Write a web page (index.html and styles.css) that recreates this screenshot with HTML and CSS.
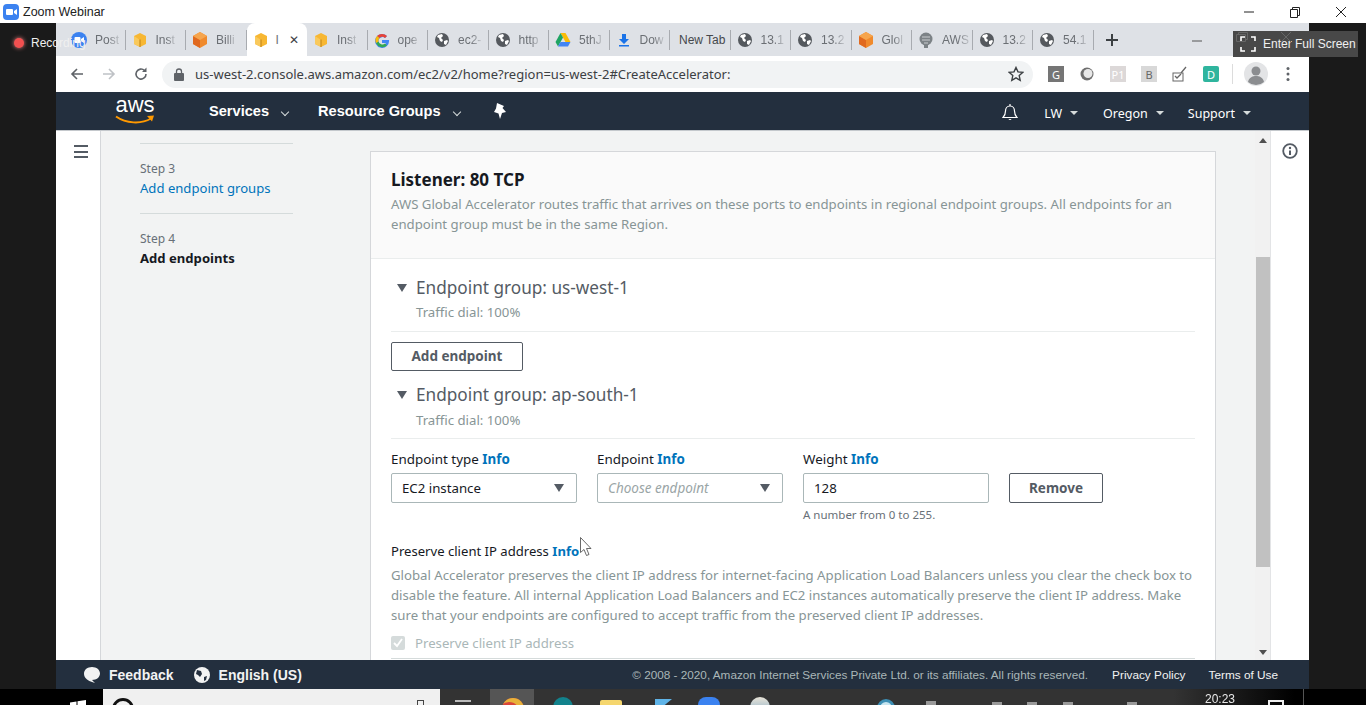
FILE: index.html
```html
<!DOCTYPE html>
<html lang="en">
<head>
    <meta charset="UTF-8">
    <title>Zoom Webinar</title>
    <link rel="stylesheet" href="styles.css">
</head>
<body>
    <svg class="defs" width="0" height="0">
        <symbol id="cubeY" viewBox="0 0 16 16">
            <path d="M8 1l6 3v8l-6 3-6-3V4z" fill="#f7b733"/>
            <path d="M8 8v7l-6-3V4z" fill="#f9c95c"/>
            <path d="M7.4 7.5v7.5h1.2V7.5z" fill="#c98a1a"/>
        </symbol>
        <symbol id="cubeO" viewBox="0 0 16 16">
            <path d="M8 0l7 4v8l-7 4-7-4V4z" fill="#f08a2c"/>
            <path d="M8 8v8l-7-4V4z" fill="#e0691f"/>
            <path d="M8 0l7 4-7 4-7-4z" fill="#f6a54d"/>
        </symbol>
        <symbol id="globe" viewBox="0 0 16 16">
            <circle cx="8" cy="8" r="7" fill="#55595e"/>
            <path d="M4 3l4-1 1 2-2 2 2 2-1 2-2-1-1-3-2-1zM10 9l3-1 1 1-2 4-2-1z" fill="#fff"/>
        </symbol>
    </svg>

    <header class="titlebar">
        <svg class="zoom-logo" width="16" height="16" viewBox="0 0 16 16"><rect width="16" height="16" rx="4" fill="#3b82f0"/><rect x="3" y="5" width="7" height="6" rx="1" fill="#fff"/><path d="M11 7l3-2v6l-3-2z" fill="#fff"/></svg>
        <span class="titlebar-name">Zoom Webinar</span>
        <div class="win-controls">
            <svg width="12" height="12" viewBox="0 0 12 12"><path d="M1 6h10" stroke="#222" stroke-width="1"/></svg>
            <svg width="12" height="12" viewBox="0 0 12 12"><path d="M1.5 3.5h7v8h-7zM3.5 3.5v-2h7v8h-2" fill="none" stroke="#222"/></svg>
            <svg width="12" height="12" viewBox="0 0 12 12"><path d="M1 1l10 10M11 1L1 11" stroke="#222"/></svg>
        </div>
    </header>

    <div class="stage">
        <div class="side-black side-left"></div>
        <div class="browser">
            <div class="tabs">
                <div class="tab"><svg class="fav" viewBox="0 0 16 16"><rect width="16" height="16" rx="8" fill="#3b82f0"/><rect x="3.5" y="5" width="6" height="6" rx="1" fill="#fff"/><path d="M10 7l3-2v6l-3-2z" fill="#fff"/></svg><span class="tab-text">Post</span></div>
                <div class="tab"><svg class="fav"><use href="#cubeY"/></svg><span class="tab-text">Inst</span></div>
                <div class="tab"><svg class="fav"><use href="#cubeO"/></svg><span class="tab-text">Billi</span></div>
                <div class="tab tab-active"><svg class="fav"><use href="#cubeY"/></svg><span class="tab-text tab-text-short">I</span><span class="tab-x">✕</span></div>
                <div class="tab"><svg class="fav"><use href="#cubeY"/></svg><span class="tab-text">Inst</span></div>
                <div class="tab"><svg class="fav" viewBox="0 0 16 16"><path d="M15 8H8v3h4a4 4 0 1 1-1-5l2-2a7 7 0 1 0 2 4z" fill="#4285f4"/><path d="M3 4l2.5 2A4 4 0 0 1 11 6l2-2A7 7 0 0 0 3 4z" fill="#ea4335"/><path d="M2 11l2.5-1.5a4 4 0 0 0 6.5 2L13 13.5A7 7 0 0 1 2 11z" fill="#34a853"/><path d="M2 11a7 7 0 0 1 1-7l2.5 2a4 4 0 0 0-1 3.5z" fill="#fbbc05"/></svg><span class="tab-text">ope</span></div>
                <div class="tab"><svg class="fav"><use href="#globe"/></svg><span class="tab-text">ec2-</span></div>
                <div class="tab"><svg class="fav"><use href="#globe"/></svg><span class="tab-text">http</span></div>
                <div class="tab"><svg class="fav" viewBox="0 0 16 16"><path d="M5.5 1h5l5 9h-5z" fill="#fbbc05"/><path d="M5.5 1l-5 9 2.5 4.5 5-9z" fill="#1fa463"/><path d="M3 14.5h10l2.5-4.5h-10z" fill="#4285f4"/></svg><span class="tab-text">5thJ</span></div>
                <div class="tab"><svg class="fav" viewBox="0 0 16 16"><path d="M6 2h4v5h3l-5 5-5-5h3zM3 13h10v1.5H3z" fill="#1a73e8"/></svg><span class="tab-text">Dow</span></div>
                <div class="tab tab-plain"><span class="tab-text tab-text-full">New Tab</span></div>
                <div class="tab"><svg class="fav"><use href="#globe"/></svg><span class="tab-text">13.1</span></div>
                <div class="tab"><svg class="fav"><use href="#globe"/></svg><span class="tab-text">13.2</span></div>
                <div class="tab"><svg class="fav"><use href="#cubeO"/></svg><span class="tab-text">Glol</span></div>
                <div class="tab"><svg class="fav" viewBox="0 0 16 16"><circle cx="8" cy="7" r="6.5" fill="#7c8286"/><path d="M4 5h8M4 8h8M6 11h4" stroke="#c9cccf"/><rect x="6" y="13" width="4" height="3" fill="#7c8286"/></svg><span class="tab-text">AWS</span></div>
                <div class="tab"><svg class="fav"><use href="#globe"/></svg><span class="tab-text">13.2</span></div>
                <div class="tab"><svg class="fav"><use href="#globe"/></svg><span class="tab-text">54.1</span></div>
                <svg class="new-tab" width="14" height="14" viewBox="0 0 14 14"><path d="M7 1v12M1 7h12" stroke="#3c4043" stroke-width="2"/></svg>
            </div>

            <div class="toolbar">
                <svg class="tool-icon" width="16" height="16" viewBox="0 0 16 16"><path d="M14 8H3M8 3L3 8l5 5" fill="none" stroke="#5f6368" stroke-width="1.6"/></svg>
                <svg class="tool-icon" width="16" height="16" viewBox="0 0 16 16"><path d="M2 8h11M8 3l5 5-5 5" fill="none" stroke="#bfc2c6" stroke-width="1.6"/></svg>
                <svg class="tool-icon" width="16" height="16" viewBox="0 0 16 16"><path d="M13 8a5 5 0 1 1-1.5-3.5" fill="none" stroke="#5f6368" stroke-width="1.6"/><path d="M13.5 1.5V6H9z" fill="#5f6368"/></svg>
                <div class="omnibox">
                    <svg width="10" height="13" viewBox="0 0 10 13"><rect y="5" width="10" height="8" rx="1" fill="#5f6368"/><path d="M2.5 5V3.5a2.5 2.5 0 0 1 5 0V5" fill="none" stroke="#5f6368" stroke-width="1.3"/></svg>
                    <span class="url">us-west-2.console.aws.amazon.com/ec2/v2/home?region=us-west-2#CreateAccelerator:</span>
                    <svg class="star" width="16" height="16" viewBox="0 0 16 16"><path d="M8 1.5l2 4.4 4.7.5-3.5 3.2 1 4.7L8 11.9l-4.2 2.4 1-4.7L1.3 6.4 6 5.9z" fill="none" stroke="#3c4043" stroke-width="1.4"/></svg>
                </div>
                <div class="extensions">
                    <span class="ext ext-g">G</span>
                    <svg class="ext-svg" width="16" height="16" viewBox="0 0 16 16"><circle cx="8" cy="8" r="6.5" fill="#6f6f6f"/><circle cx="9" cy="7.5" r="4.5" fill="#e8e8e8"/></svg>
                    <span class="ext ext-p">P1</span>
                    <span class="ext ext-b">B</span>
                    <svg class="ext-svg" width="16" height="16" viewBox="0 0 16 16"><rect x="1" y="7" width="10" height="8" fill="none" stroke="#666"/><path d="M3 10l2 2 4-4M9 7l5-6" fill="none" stroke="#666" stroke-width="1.3"/></svg>
                    <span class="ext ext-d">D</span>
                </div>
                <span class="tool-divider"></span>
                <svg class="avatar" width="24" height="24" viewBox="0 0 24 24"><circle cx="12" cy="12" r="12" fill="#e3e4e6"/><circle cx="12" cy="9" r="4.5" fill="#8b8d90"/><path d="M4 20c1-5 5-6 8-6s7 1 8 6a12 12 0 0 1-16 0z" fill="#8b8d90"/></svg>
                <svg class="dots" width="4" height="16" viewBox="0 0 4 16"><circle cx="2" cy="2.5" r="1.5" fill="#5f6368"/><circle cx="2" cy="8" r="1.5" fill="#5f6368"/><circle cx="2" cy="13.5" r="1.5" fill="#5f6368"/></svg>
            </div>

            <nav class="topnav">
                <div class="aws-logo">
                    <span class="aws-word">aws</span>
                    <svg width="40" height="10" viewBox="0 0 40 10"><path d="M1 1.5c10 7 25 8 35 2" fill="none" stroke="#ff9900" stroke-width="2"/><path d="M32 1l7-.5-2 6z" fill="#ff9900"/></svg>
                </div>
                <span class="nav-main nav-services">Services</span><i class="chev"></i>
                <span class="nav-main nav-groups">Resource Groups</span><i class="chev"></i>
                <svg class="pin" width="14" height="16" viewBox="0 0 14 16"><path d="M4 0l7 3-1.5 2 3.5 4-4 1-2 6-1.5-5.5L1 9l2-3.5z" fill="#fff"/></svg>
                <div class="nav-right">
                    <svg class="bell" width="16" height="18" viewBox="0 0 16 18"><path d="M8 2c-3 0-4.5 2.5-4.5 5 0 4-1.5 5.5-2.5 6.5h14c-1-1-2.5-2.500-2.500-6.500 0-2.500-1.500-5-4.500-5z" fill="none" stroke="#fff" stroke-width="1.2"/><path d="M6.500 15a1.600 1.600 0 0 0 3 0z" fill="#fff"/><path d="M8 0v2" stroke="#fff" stroke-width="1.2"/></svg>
                    <span class="nav-sub nav-lw">LW</span><i class="tri"></i>
                    <span class="nav-sub nav-oregon">Oregon</span><i class="tri"></i>
                    <span class="nav-sub nav-support">Support</span><i class="tri"></i>
                </div>
            </nav>

            <main class="console">
                <div class="rail">
                    <span class="burger"><i></i><i></i><i></i></span>
                </div>
                <aside class="wizard">
                    <div class="step">
                        <div class="step-no">Step 3</div>
                        <a class="step-link">Add endpoint groups</a>
                    </div>
                    <div class="step">
                        <div class="step-no">Step 4</div>
                        <div class="step-now">Add endpoints</div>
                    </div>
                </aside>
                <section class="content">
                    <div class="card">
                        <div class="card-head">
                            <h2>Listener: 80 TCP</h2>
                            <p class="muted">AWS Global Accelerator routes traffic that arrives on these ports to endpoints in regional endpoint groups. All endpoints for an<br>endpoint group must be in the same Region.</p>
                        </div>
                        <div class="card-body">
                            <div class="group">
                                <div class="group-title"><i class="group-tri"></i>Endpoint group: us-west-1</div>
                                <div class="group-dial muted">Traffic dial: 100%</div>
                            </div>
                            <button class="btn btn-add">Add endpoint</button>
                            <div class="group group-second">
                                <div class="group-title"><i class="group-tri"></i>Endpoint group: ap-south-1</div>
                                <div class="group-dial muted">Traffic dial: 100%</div>
                            </div>
                            <div class="fields">
                                <div class="field">
                                    <label class="field-label">Endpoint type <a class="info">Info</a></label>
                                    <div class="control">EC2 instance<i class="select-tri"></i></div>
                                </div>
                                <div class="field">
                                    <label class="field-label">Endpoint <a class="info">Info</a></label>
                                    <div class="control control-empty">Choose endpoint<i class="select-tri"></i></div>
                                </div>
                                <div class="field">
                                    <label class="field-label">Weight <a class="info">Info</a></label>
                                    <div class="control">128</div>
                                    <div class="hint">A number from 0 to 255.</div>
                                </div>
                                <button class="btn btn-remove">Remove</button>
                            </div>
                            <div class="field-label preserve-label">Preserve client IP address <a class="info">Info</a></div>
                            <p class="muted preserve-text">Global Accelerator preserves the client IP address for internet-facing Application Load Balancers unless you clear the check box to<br>disable the feature. All internal Application Load Balancers and EC2 instances automatically preserve the client IP address. Make<br>sure that your endpoints are configured to accept traffic from the preserved client IP addresses.</p>
                            <div class="check-row">
                                <span class="checkbox"><svg width="10" height="10" viewBox="0 0 10 10"><path d="M1 5l3 3 5-7" fill="none" stroke="#fff" stroke-width="1.8"/></svg></span>
                                <span class="check-text">Preserve client IP address</span>
                            </div>
                        </div>
                    </div>
                </section>
                <div class="scrollbar">
                    <i class="scroll-up"></i>
                    <span class="scroll-thumb"></span>
                    <i class="scroll-down"></i>
                </div>
                <div class="tools-panel">
                    <svg width="16" height="16" viewBox="0 0 16 16"><circle cx="8" cy="8" r="6.8" fill="none" stroke="#545b64" stroke-width="1.8"/><circle cx="8" cy="5" r="1.2" fill="#545b64"/><path d="M8 7.5V12" stroke="#545b64" stroke-width="2"/></svg>
                </div>
            </main>

            <footer class="footer">
                <svg width="18" height="18" viewBox="0 0 18 18"><path d="M9 1c4.5 0 8 2.800 8 6.500S13.500 14 9 14l3 3c-4-1-8-3-9.500-5C1.500 11 1 9 1 7.500 1 3.800 4.500 1 9 1z" fill="#f2f3f3"/></svg>
                <span class="foot-main foot-feedback">Feedback</span>
                <svg class="foot-globe" width="16" height="16" viewBox="0 0 16 16"><circle cx="8" cy="8" r="8" fill="#f2f3f3"/><path d="M3 3l4 1 1 3-2 3-2-2-2-1zM10 10l3-1-1 4-2 1z" fill="#232f3e"/></svg>
                <span class="foot-main foot-lang">English (US)</span>
                <span class="foot-copy">© 2008 - 2020, Amazon Internet Services Private Ltd. or its affiliates. All rights reserved.</span>
                <span class="foot-link foot-privacy">Privacy Policy</span>
                <span class="foot-link foot-terms">Terms of Use</span>
            </footer>
        </div>
        <div class="side-black"></div>

        <div class="recording"><i class="rec-dot"></i>Recording</div>
        <div class="ghost-controls">
            <svg width="10" height="10" viewBox="0 0 10 10"><path d="M0 5h10" stroke="#555"/></svg>
        </div>
        <div class="fullscreen">
            <svg class="ghost-restore" width="12" height="10" viewBox="0 0 12 10"><path d="M.5 2.500h9v7h-9zM2.500 2.500v-2h9v7h-2" fill="none" stroke="#666"/></svg>
            <svg width="16" height="16" viewBox="0 0 16 16"><path d="M1 5V1h4M11 1h4v4M15 11v4h-4M5 15H1v-4" fill="none" stroke="#fff" stroke-width="1.6"/></svg>
            Enter Full Screen
            <svg class="ghost-close" width="10" height="10" viewBox="0 0 10 10"><path d="M0 0l10 10M10 0L0 10" stroke="#666"/></svg>
        </div>
        <svg class="cursor" width="13" height="20" viewBox="0 0 13 20"><path d="M.5.500v15l3.500-3 2.500 6 2.500-1-2.500-6H11z" fill="#fff" stroke="#444" stroke-width=".8"/></svg>
    </div>

    <div class="taskbar">
        <div class="task-start">
            <svg class="win-logo" width="16" height="16" viewBox="0 0 16 16"><path d="M0 2.500l6.500-1v6H0zM7.500 1.300L16 0v7.500H7.500zM0 8.500h6.500v6L0 13.500zM7.500 8.500H16V16l-8.500-1.300z" fill="#fff"/></svg>
        </div>
        <div class="task-search">
            <i class="search-ring"></i>
            <i class="search-mic"></i>
        </div>
        <div class="task-items">
            <i class="task-view"></i>
            <div class="task-active"><i class="ti ti-chrome"></i></div>
            <i class="ti ti-teal"></i>
            <i class="ti ti-folder"></i>
            <i class="ti ti-play"></i>
            <i class="ti ti-zoom"></i>
            <i class="ti ti-bird"></i>
            <i class="ti ti-aws"></i>
            <i class="tick tick-1"></i>
            <i class="tick tick-2"></i>
            <i class="tick tick-3"></i>
            <i class="tick tick-4"></i>
            <i class="tick tick-5"></i>
            <span class="clock">20:23</span>
            <i class="notify"></i>
        </div>
    </div>
</body>
</html>
```

FILE: styles.css
```css
* {
    box-sizing: border-box;
}

html, body {
    margin: 0;
    height: 705px;
    overflow: hidden;
}

body {
    background: #fff;
    font-family: "Noto Sans", sans-serif;
    font-size: 14px;
    color: #16191f;
    /* the reference is a frame of a video, everything is a bit soft */
    filter: blur(0.35px);
}

.defs {
    position: absolute;
}

p, h2 {
    margin: 0;
}

/* window title bar */
.titlebar {
    height: 23px;
    display: flex;
    align-items: center;
    padding-left: 3px;
    background: #fff;
}

.titlebar-name {
    margin-left: 4px;
    font-family: "Liberation Sans", sans-serif;
    font-size: 12.5px;
    color: #222;
}

.win-controls {
    margin-left: auto;
    display: flex;
    gap: 34px;
    padding-right: 19px;
}

/* black video margins and browser */
.stage {
    position: relative;
    height: 666px;
    display: flex;
    background: #1a1a1a;
}

.side-black {
    flex: 1;
}

.side-left {
    flex: none;
    width: 56px;
}

.browser {
    width: 1253px;
    display: flex;
    flex-direction: column;
}

/* tab strip */
.tabs {
    height: 33px;
    display: flex;
    align-items: stretch;
    padding-left: 9px;
    background: #dee1e6;
}

.tab {
    width: 60.5px;
    display: flex;
    align-items: center;
    padding-left: 6px;
    position: relative;
    font-family: "Liberation Sans", sans-serif;
    font-size: 12px;
    color: #6b6f74;
}

.tab::after {
    content: "";
    position: absolute;
    right: 0;
    top: 7px;
    height: 20px;
    width: 1px;
    background: #a8abb0;
}

.tab-active {
    background: #fff;
    border-radius: 8px 8px 0 0;
}

.tab-active::after {
    display: none;
}

.fav {
    width: 16px;
    height: 16px;
    flex: none;
}

.tab-text {
    margin-left: 8px;
    white-space: nowrap;
    -webkit-mask-image: linear-gradient(90deg, #000 55%, rgba(0, 0, 0, 0.25));
    mask-image: linear-gradient(90deg, #000 55%, rgba(0, 0, 0, 0.25));
}

.tab-text-short {
    margin-left: 7px;
    -webkit-mask-image: none;
    mask-image: none;
}

.tab-x {
    margin-left: 10px;
    font-size: 12px;
    color: #3c4043;
}

.tab-plain {
    padding-left: 9px;
}

.tab-text-full {
    margin-left: 0;
    color: #45484c;
    -webkit-mask-image: none;
    mask-image: none;
}

.new-tab {
    align-self: center;
    margin-left: 11px;
}

/* address bar */
.toolbar {
    height: 36px;
    display: flex;
    align-items: center;
    padding-left: 13px;
    background: #fff;
}

.tool-icon {
    margin-right: 16px;
}

.omnibox {
    width: 871px;
    height: 27px;
    margin-left: -3px;
    display: flex;
    align-items: center;
    padding-left: 12px;
    padding-right: 9px;
    border-radius: 14px;
    background: #f1f3f4;
}

.url {
    margin-left: 11px;
    font-size: 13px;
    color: #3c4043;
    white-space: nowrap;
}

.star {
    margin-left: auto;
}

.extensions {
    display: flex;
    align-items: center;
    gap: 15px;
    margin-left: 15px;
}

.ext {
    width: 16px;
    height: 16px;
    display: flex;
    align-items: center;
    justify-content: center;
    font-size: 11px;
    color: #fff;
    background: #757575;
}

.ext-p {
    background: #dcd8d8;
}

.ext-b {
    background: #d8d8d8;
    color: #666;
}

.ext-d {
    background: #2fb59e;
    border-radius: 2px;
}

.tool-divider {
    width: 1px;
    height: 20px;
    margin-left: 13px;
    background: #dcdcdc;
}

.avatar {
    margin-left: 11px;
}

.dots {
    margin-left: 18px;
}

/* aws navigation */
.topnav {
    height: 39px;
    display: flex;
    align-items: center;
    background: #232f3e;
    border-bottom: 1px solid #c4c8cc;
    color: #fff;
}

.aws-logo {
    width: 40px;
    margin-left: 59px;
    display: flex;
    flex-direction: column;
    align-items: center;
}

.aws-word {
    height: 18px;
    line-height: 16px;
    font-family: "Liberation Sans", sans-serif;
    font-size: 22px;
}

.nav-main {
    font-family: "Liberation Sans", sans-serif;
    font-size: 14.6px;
    font-weight: bold;
    white-space: nowrap;
}

.nav-services {
    margin-left: 54px;
}

.nav-groups {
    margin-left: 30px;
}

.chev {
    width: 6px;
    height: 6px;
    margin-left: 13px;
    margin-top: 1px;
    border-right: 1.5px solid #d5dbdb;
    border-bottom: 1.5px solid #d5dbdb;
    transform: rotate(45deg);
}

.pin {
    margin-left: 33px;
}

.nav-right {
    margin-left: auto;
    margin-top: 4px;
    display: flex;
    align-items: center;
    padding-right: 58px;
}

.nav-sub {
    font-size: 12.5px;
    white-space: nowrap;
}

.nav-lw {
    margin-left: 26px;
}

.nav-oregon {
    margin-left: 25px;
}

.nav-support {
    margin-left: 24px;
}

.tri {
    width: 0;
    height: 0;
    margin-left: 8px;
    border-left: 4px solid transparent;
    border-right: 4px solid transparent;
    border-top: 4px solid #d5dbdb;
}

/* console body */
.console {
    height: 529px;
    display: flex;
    background: #f2f3f3;
    overflow: hidden;
}

.rail {
    width: 45px;
    flex: none;
    padding: 14px 0 0 18px;
    background: #fff;
    border-right: 1px solid #d5d7da;
}

.burger {
    display: flex;
    flex-direction: column;
    gap: 3.5px;
    width: 14px;
}

.burger i {
    height: 2px;
    background: #545b64;
}

.wizard {
    width: 269px;
    flex: none;
    padding: 12px 0 0 39px;
}

.step {
    width: 153px;
    padding: 15px 0;
    border-top: 1px solid #d5dbdb;
    line-height: 20px;
}

.step-no {
    font-size: 12px;
    color: #687078;
    margin-bottom: -1px;
}

.step-link {
    display: block;
    color: #0073bb;
    font-size: 13.1px;
}

.step-now {
    font-size: 13.1px;
    font-weight: bold;
}

.content {
    width: 885px;
    flex: none;
    padding-top: 20px;
}

.card {
    width: 846px;
    background: #fff;
    border: 1px solid #d5d7da;
    border-bottom: 0;
}

.card-head {
    height: 107px;
    padding: 16px 20px 0;
    background: #fafafa;
    border-bottom: 1px solid #eaeded;
}

.card-head h2 {
    font-size: 17px;
    line-height: 24px;
    font-weight: bold;
    margin-bottom: 2px;
}

.muted {
    color: #879596;
    line-height: 20px;
    font-size: 13.2px;
    white-space: nowrap;
}

.card-body {
    padding: 16px 20px 20px;
}

.group {
    padding: 0 0 9px 0;
    border-bottom: 1px solid #eaeded;
}

.group-second {
    margin-top: 12px;
    padding-bottom: 8px;
}

.group-title {
    display: flex;
    align-items: center;
    margin-top: 1px;
    font-size: 17.2px;
    line-height: 24px;
    color: #545b64;
}

.group-tri {
    width: 0;
    height: 0;
    margin: 0 9px 0 6px;
    border-left: 5px solid transparent;
    border-right: 5px solid transparent;
    border-top: 8px solid #545b64;
}

.group-dial {
    margin: 2px 0 0 25px;
}

.group-second .group-dial {
    margin-top: 3px;
}

.btn {
    border: 1px solid #545b64;
    border-radius: 2px;
    background: #fff;
    color: #545b64;
    font-family: "Noto Sans", sans-serif;
    font-size: 13.5px;
    font-weight: bold;
}

.btn-add {
    display: block;
    width: 132px;
    height: 29px;
    margin-top: 10px;
    padding-bottom: 3px;
}

.fields {
    display: grid;
    grid-template-columns: 186px 186px 186px 94px;
    column-gap: 20px;
    margin-top: 10px;
}

.field-label {
    display: block;
    line-height: 20px;
    font-size: 13.4px;
}

.info {
    color: #0073bb;
    font-weight: bold;
}

.control {
    position: relative;
    height: 30px;
    margin-top: 4px;
    padding-left: 10px;
    line-height: 28px;
    font-size: 13.25px;
    background: #fff;
    border: 1px solid #aab7b8;
    border-radius: 2px;
}

.control-empty {
    color: #9aa5a6;
    font-size: 13.5px;
    font-style: italic;
}

.select-tri {
    position: absolute;
    right: 12px;
    top: 10px;
    width: 0;
    height: 0;
    border-left: 5px solid transparent;
    border-right: 5px solid transparent;
    border-top: 8px solid #545b64;
}

.hint {
    margin-top: 4px;
    font-size: 11.5px;
    line-height: 16px;
    color: #687078;
}

.btn-remove {
    width: 94px;
    height: 30px;
    margin-top: 24px;
}

.preserve-label {
    margin-top: 18px;
    font-size: 13.1px;
}

.preserve-text {
    margin-top: 4px;
}

.check-row {
    display: flex;
    align-items: center;
    height: 26px;
    margin-top: 8px;
    padding-bottom: 5px;
    border-bottom: 1px solid #d5dbdb;
}

.checkbox {
    width: 14px;
    height: 14px;
    display: flex;
    align-items: center;
    justify-content: center;
    border-radius: 2px;
    background: #d5dbdb;
}

.check-text {
    margin-left: 10px;
    font-size: 13.2px;
    color: #aab7b8;
}

/* scrollbar and tools panel */
.scrollbar {
    width: 15px;
    flex: none;
    display: flex;
    flex-direction: column;
    align-items: center;
    background: #f1f1f1;
}

.scroll-up {
    margin-top: 7px;
    border-left: 4px solid transparent;
    border-right: 4px solid transparent;
    border-bottom: 5px solid #505050;
}

.scroll-thumb {
    width: 14px;
    height: 310px;
    margin-top: 114px;
    background: #c1c1c1;
}

.scroll-down {
    margin-top: auto;
    margin-bottom: 5px;
    border-left: 4px solid transparent;
    border-right: 4px solid transparent;
    border-top: 5px solid #505050;
}

.tools-panel {
    flex: 1;
    padding: 12px 0 0 11px;
    background: #fff;
    border-left: 1px solid #e3e4e6;
}

/* aws footer */
.footer {
    height: 29px;
    display: flex;
    align-items: center;
    padding-left: 27px;
    padding-right: 31px;
    background: #232f3e;
    font-family: "Liberation Sans", sans-serif;
    white-space: nowrap;
}

.foot-main {
    font-size: 14px;
    font-weight: bold;
    color: #f2f3f3;
}

.foot-feedback {
    margin-left: 8px;
}

.foot-globe {
    margin-left: 20px;
}

.foot-lang {
    margin-left: 9px;
}

.foot-copy {
    margin-left: auto;
    font-size: 11.75px;
    color: #aab7b8;
}

.foot-link {
    font-size: 11.8px;
    color: #f2f3f3;
}

.foot-privacy {
    margin-left: 24px;
}

.foot-terms {
    margin-left: 23px;
}

/* things lying over the browser */
.recording {
    position: absolute;
    left: 14px;
    top: 11px;
    display: flex;
    align-items: center;
    gap: 7px;
    font-family: "Liberation Sans", sans-serif;
    font-size: 12px;
    line-height: 18px;
    color: #f0f0f0;
}

.rec-dot {
    width: 10px;
    height: 10px;
    border-radius: 50%;
    background: #f25050;
    box-shadow: 0 0 4px #f08080;
}

.ghost-controls {
    position: absolute;
    left: 1192px;
    top: 8px;
}

.fullscreen {
    position: absolute;
    left: 1233px;
    top: 8px;
    width: 125px;
    height: 26px;
    display: flex;
    align-items: center;
    gap: 7px;
    padding-left: 7px;
    background: #484848;
    color: #f0f0f0;
    font-family: "Liberation Sans", sans-serif;
    font-size: 12px;
    white-space: nowrap;
}

.ghost-restore {
    position: absolute;
    left: 3px;
    top: 1px;
}

.ghost-close {
    position: absolute;
    left: 48px;
    top: 1px;
}

.cursor {
    position: absolute;
    left: 580px;
    top: 514px;
}

/* windows task bar, mostly cut off by the video frame */
.taskbar {
    height: 16px;
    display: flex;
    overflow: hidden;
    background: #000;
}

.task-start {
    width: 103px;
    flex: none;
    padding: 11px 0 0 70px;
}

.task-search {
    width: 337px;
    flex: none;
    position: relative;
    background: #f0f0f0;
}

.search-ring {
    position: absolute;
    left: 9px;
    top: 9px;
    width: 22px;
    height: 22px;
    border: 3px solid #111;
    border-radius: 50%;
}

.search-mic {
    position: absolute;
    right: 16px;
    top: 11px;
    width: 7px;
    height: 10px;
    border: 1px solid #444;
}

.task-items {
    width: 864px;
    flex: none;
    position: relative;
    background: linear-gradient(90deg, #333 85%, #000 99%);
    border-right: 1px solid #555;
}

.task-items > * {
    position: absolute;
    top: 0;
}

.task-items > .task-view {
    left: 15px;
    top: 11px;
    width: 16px;
    height: 2px;
    background: #bbb;
}

.task-active {
    left: 50px;
    width: 44px;
    height: 16px;
    background: #555;
}

.ti {
    display: block;
    width: 22px;
    height: 22px;
    border-radius: 50%;
}

.ti-chrome {
    margin: 9px 0 0 12px;
    background: #d9463a;
    box-shadow: inset -4px 4px 0 #e8b23a;
}

.task-items > .ti-teal {
    left: 113px;
    top: 8px;
    width: 20px;
    height: 20px;
    background: #12828c;
}

.task-items > .ti-folder {
    left: 160px;
    top: 11px;
    height: 16px;
    border-radius: 2px 2px 0 0;
    background: #f5d66e;
}

.task-items > .ti-play {
    left: 215px;
    top: 10px;
    border-radius: 0;
    width: 0;
    height: 0;
    border-left: 17px solid #5fb4e8;
    border-bottom: 14px solid transparent;
}

.task-items > .ti-zoom {
    left: 258px;
    top: 8px;
    border-radius: 8px;
    background: #3b82f0;
}

.task-items > .ti-bird {
    left: 310px;
    top: 8px;
    width: 20px;
    height: 20px;
    background: linear-gradient(#e9e4d8, #7aa5c4);
}

.task-items > .ti-aws {
    left: 437px;
    top: 10px;
    width: 18px;
    height: 18px;
    background: #c8e6f0;
    border: 3px solid #3d8fb5;
}

.tick {
    width: 10px;
    height: 4px;
    background: #999;
}

.task-items > .tick-1 { left: 486px; top: 12px; }
.task-items > .tick-2 { left: 552px; top: 13px; }
.task-items > .tick-3 { left: 587px; top: 13px; }
.task-items > .tick-4 { left: 623px; top: 13px; }
.task-items > .tick-5 { left: 687px; top: 13px; }

.task-items > .clock {
    left: 765px;
    top: 4px;
    font-family: "Liberation Sans", sans-serif;
    font-size: 12px;
    line-height: 12px;
    color: #e8e8e8;
}

.task-items > .notify {
    left: 828px;
    top: 11px;
    width: 16px;
    height: 8px;
    border: 2px solid #eee;
}
```
